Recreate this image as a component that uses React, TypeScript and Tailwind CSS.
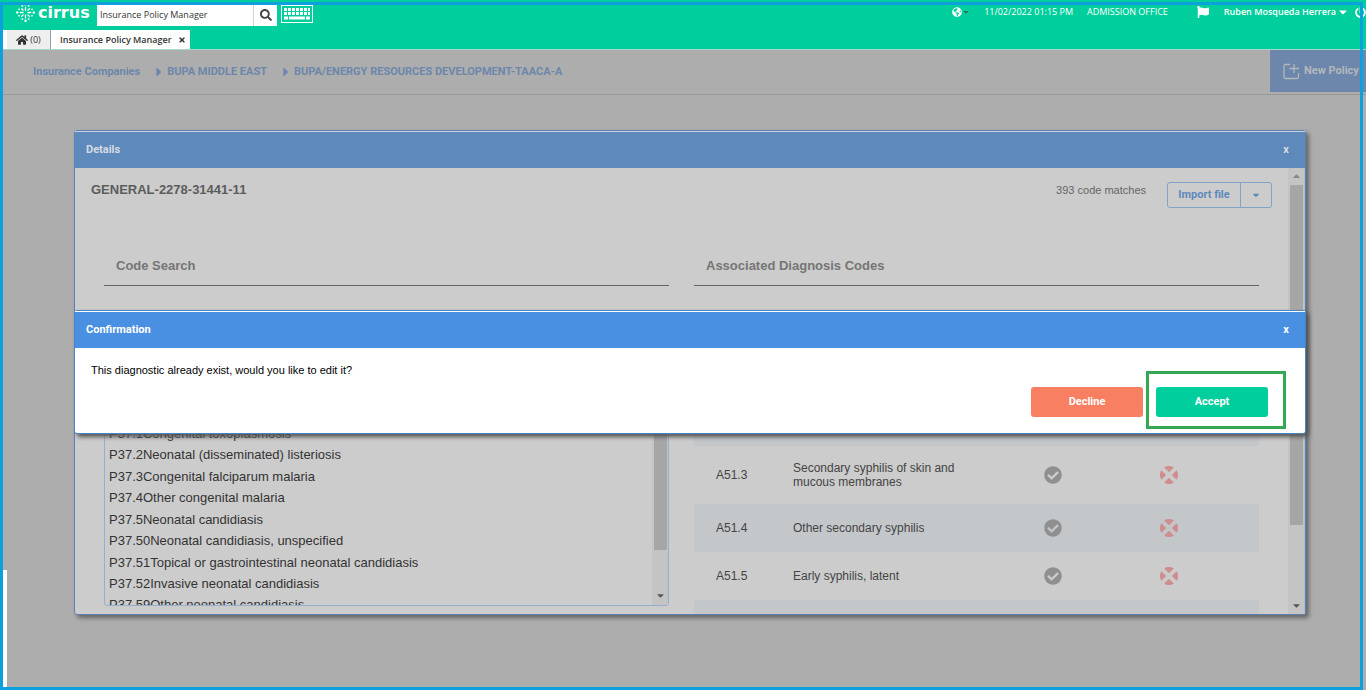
import { useState } from "react";
import { FaCheckCircle, FaFlag, FaGlobeAmericas, FaHome, FaPowerOff, FaSearch, FaTimes, FaCaretDown, FaCaretRight } from "react-icons/fa";

const codes = [
  { code: "P37.1", name: "Congenital toxoplasmosis" },
  { code: "P37.2", name: "Neonatal (disseminated) listeriosis" },
  { code: "P37.3", name: "Congenital falciparum malaria" },
  { code: "P37.4", name: "Other congenital malaria" },
  { code: "P37.5", name: "Neonatal candidiasis" },
  { code: "P37.50", name: "Neonatal candidiasis, unspecified" },
  { code: "P37.51", name: "Topical or gastrointestinal neonatal candidiasis" },
  { code: "P37.52", name: "Invasive neonatal candidiasis" },
  { code: "P37.59", name: "Other neonatal candidiasis" },
];

const diagnoses = [
  { code: "A51.2", name: "Primary syphilis of other sites", height: "h-12" },
  { code: "A51.3", name: "Secondary syphilis of skin and mucous membranes", height: "h-[58px]" },
  { code: "A51.4", name: "Other secondary syphilis", height: "h-12" },
  { code: "A51.5", name: "Early syphilis, latent", height: "h-12" },
];

function Logo() {
  return (
    <div className="flex w-[73px] items-center gap-[3px] text-white">
      <svg width="19" height="19" viewBox="0 0 20 20" fill="none" stroke="currentColor" strokeWidth="1.4" strokeLinecap="round" className="shrink-0">
        {[0, 90, 180, 270].map(angle => (
          <g key={angle} transform={`rotate(${angle} 10 10)`} fill="currentColor">
            <path d="M10 7.500V4.500M12.500 7.500L14 6" />
            <circle cx="10" cy="1.300" r="0.600" />
            <circle cx="13.300" cy="3.200" r="0.300" />
            <circle cx="6.700" cy="3.200" r="0.300" />
          </g>
        ))}
      </svg>
      <span className="font-['DejaVu_Sans',sans-serif] text-base font-bold leading-4">cirrus</span>
    </div>
  );
}

function Keyboard() {
  return (
    <svg width="32" height="18" viewBox="0 0 32 18" fill="none" stroke="#fff">
      <rect x="0.5" y="0.5" width="31" height="17" />
      <path d="M3 4.5H29M3 8.5H29" strokeWidth="3" strokeDasharray="3 1" />
      <path d="M3 13H7M8 13H24M25 13H29" strokeWidth="3" />
    </svg>
  );
}

function RemoveIcon() {
  return (
    <svg width="18" height="18" viewBox="0 0 18 18" fill="#d08d8d">
      {[0, 90, 180, 270].map(angle => (
        <path key={angle} transform={`rotate(${angle} 9 9)`} d="M4.200 1.400A9 9 0 0 1 13.800 1.400L9 6.200Z" />
      ))}
    </svg>
  );
}

function NewPolicyIcon() {
  return (
    <svg width="17" height="17" viewBox="0 0 17 17" fill="none" stroke="#b4b7bc" strokeWidth="1.3">
      <path d="M7 1.5H2.5Q1 1.5 1 3V14Q1 15.500 2.500 15.500H14Q15.500 15.500 15.500 14V10M11 1V10M6.500 5.500H16" />
    </svg>
  );
}

function TitleBar({ title, className }: { title: string; className: string }) {
  return (
    <div className={`flex h-[37px] items-center justify-between border-t pl-[11px] pr-[15px] pt-px font-[Roboto,sans-serif] text-[11px] font-bold ${className}`}>
      <h2>{title}</h2>
      <button type="button" aria-label={`Close ${title}`} className="w-2">x</button>
    </div>
  );
}

export default function App() {
  const [search, setSearch] = useState("Insurance Policy Manager");

  return (
    <div className="relative flex min-h-screen flex-col overflow-hidden bg-[#adadad] font-['Liberation_Sans',sans-serif]">
      <header className="flex h-[50px] flex-col justify-between border-b border-[#a5d8c8] bg-[#00ce9c] font-['Open_Sans',sans-serif] text-[9px]">
        <div className="flex items-start pl-4 pt-[3px]">
          <Logo />
          <form className="ml-2 flex h-[23px] bg-white" onSubmit={e => e.preventDefault()}>
            <input
              aria-label="Search"
              value={search}
              onChange={e => setSearch(e.target.value)}
              className="w-[156px] pl-[3px] text-[9px] text-[#333] outline-none"
            />
            <button type="submit" aria-label="Run search" className="flex w-6 items-center justify-center border-l border-gray-300 text-[#444]">
              <FaSearch size={12} />
            </button>
          </form>
          <button type="button" aria-label="Keyboard" className="ml-1 mt-[2px]">
            <Keyboard />
          </button>
          <div className="ml-auto flex h-[18px] items-center whitespace-nowrap text-white">
            <button type="button" aria-label="Language" className="mr-[14px] flex items-center">
              <FaGlobeAmericas size={10} />
              <FaCaretDown size={8} className="text-[#3b6e5c]" />
            </button>
            <span className="mr-[14px]">11/02/2022 01:15 PM</span>
            <span className="mr-[29px]">ADMISSION OFFICE</span>
            <FaFlag size={12} className="mr-[15px]" />
            <button type="button" className="mr-[6px] flex items-center gap-px font-semibold">
              Ruben Mosqueda Herrera <FaCaretDown size={12} />
            </button>
            <button type="button" aria-label="Log out">
              <FaPowerOff size={11} />
            </button>
          </div>
        </div>
        <div className="flex h-[19px] items-stretch border-l-[7px] border-white text-[#333]">
          <button type="button" className="flex w-[44px] items-center justify-center gap-[2px] border-r border-gray-400 bg-[#eee]">
            <FaHome size={12} /> (0)
          </button>
          <div className="flex items-center gap-[6px] bg-white pl-[9px] pr-1 font-semibold">
            <a href="#policies">Insurance Policy Manager</a>
            <button type="button" aria-label="Close tab">
              <FaTimes size={8} />
            </button>
          </div>
        </div>
      </header>

      <div className="flex h-[45px] items-start justify-between border-b border-[#999] font-[Roboto,sans-serif]">
        <nav className="flex h-11 items-center pl-[33px] text-[11px] font-bold text-[#6c87ab]">
          <a href="#companies">Insurance Companies</a>
          <FaCaretRight size={14} className="ml-3 mr-px" />
          <a href="#bupa">BUPA MIDDLE EAST</a>
          <FaCaretRight size={14} className="ml-3 mr-px" />
          <a href="#contract">BUPA/ENERGY RESOURCES DEVELOPMENT-TAACA-A</a>
        </nav>
        <button type="button" className="flex h-[42px] w-24 items-center gap-1 whitespace-nowrap bg-[#6c87ab] pl-[13px] text-[11px] font-bold text-[#b4b7bc]">
          <NewPolicyIcon /> New Policy
        </button>
      </div>

      <main className="pb-[75px] pl-[74px] pr-[60px] pt-[35px]">
        <div className="relative">
          <section className="rounded-[3px] border border-[#5e82b0] bg-[#ccc] shadow-[3px_3px_4px_#666]">
            <TitleBar title="Details" className="border-[#c5d0dc] bg-[#5e8abb] text-[#d5dbe2]" />
            <div className="flex h-[446px] overflow-hidden">
              <div className="flex-1">
                <div className="flex h-[73px] items-start pl-4 pr-4 pt-[14px] text-[#666]">
                  <h3 className="text-[13px] font-bold leading-4 text-[#5c5c5c]">GENERAL-2278-31441-11</h3>
                  <span className="ml-auto mr-[21px] text-[11px] leading-4">393 code matches</span>
                  <div className="flex h-[26px] rounded-[3px] border border-[#82a3c8] font-[Roboto,sans-serif] text-[11px] font-bold text-[#5e8abb]">
                    <button type="button" className="w-[73px] border-r border-[#82a3c8] pt-px">Import file</button>
                    <button type="button" aria-label="Import options" className="flex w-[30px] items-center justify-center">
                      <FaCaretDown size={10} />
                    </button>
                  </div>
                </div>

                <div className="grid grid-cols-2 gap-[25px] px-[29px]">
                  <div>
                    <h4 className="h-[45px] border-b border-[#666] px-3 pt-[15px] text-[13px] font-bold text-[#757575]">Code Search</h4>
                    <div className="mt-10 flex h-[280px] overflow-hidden rounded-[3px] border border-[#94b0cd]">
                      <ul className="mt-24 flex h-[193px] flex-1 flex-col pl-1 text-[13px] text-[#333]">
                        {codes.map(item => (
                          <li key={item.code} className="flex flex-1 items-center">{item.code}{item.name}</li>
                        ))}
                      </ul>
                      <div className="flex w-4 flex-col items-center justify-between bg-[#c4c4c4] pb-1">
                        <div className="h-[223px] w-[13px] bg-[#a6a6a6]" />
                        <FaCaretDown size={11} className="text-[#555]" />
                      </div>
                    </div>
                  </div>

                  <div>
                    <h4 className="h-[45px] border-b border-[#666] px-3 pt-[15px] text-[13px] font-bold text-[#757575]">Associated Diagnosis Codes</h4>
                    <table className="mt-28 w-full table-fixed text-xs leading-[14px] text-[#444]">
                      <tbody>
                        {diagnoses.map(row => (
                          <tr key={row.code} className={`odd:bg-[#c3c7ca] ${row.height}`}>
                            <td className="w-[99px] pl-[22px]">{row.code}</td>
                            <td className="w-[202px] pr-5">{row.name}</td>
                            <td className="w-[116px]">
                              <FaCheckCircle size={18} className="mx-auto text-[#8f8f8f]" />
                            </td>
                            <td className="w-[116px]">
                              <button type="button" aria-label={`Remove ${row.code}`} className="mx-auto block">
                                <RemoveIcon />
                              </button>
                            </td>
                            <td />
                          </tr>
                        ))}
                        <tr className="h-12 bg-[#c3c7ca]">
                          <td colSpan={5} />
                        </tr>
                      </tbody>
                    </table>
                  </div>
                </div>
              </div>

              <div className="flex w-[17px] flex-col items-center border-r border-[#a8bfda] bg-[#c4c4c4]">
                <FaCaretDown size={11} className="my-[3px] rotate-180 text-[#888]" />
                <div className="h-[340px] w-[13px] bg-[#a6a6a6]" />
                <FaCaretDown size={11} className="mb-[3px] mt-auto text-[#555]" />
              </div>
            </div>
          </section>

          <section role="dialog" aria-label="Confirmation" className="absolute inset-x-0 top-[180px] rounded-[3px] border border-[#4a84c8] bg-white shadow-[3px_3px_4px_#555]">
            <TitleBar title="Confirmation" className="border-white bg-[#4a90e2] text-white" />
            <p className="px-4 pt-4 text-[11px] leading-3 text-black">This diagnostic already exist, would you like to edit it?</p>
            <div className="flex justify-end gap-[13px] pb-4 pr-[37px] pt-[11px] font-[Roboto,sans-serif] text-[11px] font-bold text-white">
              <button type="button" className="h-[30px] w-28 rounded-[3px] bg-[#f97f63]">Decline</button>
              <div className="relative">
                <button type="button" className="h-[30px] w-28 rounded-[3px] bg-[#00ce9c]">Accept</button>
                <div className="pointer-events-none absolute -bottom-3 -left-[10px] -right-[18px] -top-4 border-[3px] border-[#34a853]" />
              </div>
            </div>
          </section>
        </div>
      </main>

      {/* screen frame */}
      <div className="absolute bottom-[3px] left-[3px] top-[570px] w-1 bg-white" />
      <div className="pointer-events-none absolute bottom-0 left-0 right-[3px] top-[2px] border-[3px] border-[#0ea0dc]" />
    </div>
  );
}
